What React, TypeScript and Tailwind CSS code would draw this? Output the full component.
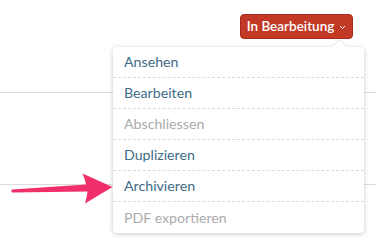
import React from "react";

const items = [
    { label: "Ansehen", enabled: true },
    { label: "Bearbeiten", enabled: true },
    { label: "Abschliessen", enabled: false },
    { label: "Duplizieren", enabled: true },
    { label: "Archivieren", enabled: true },
    { label: "PDF exportieren", enabled: false },
];

export default function App() {
    return (
        <div className="relative h-[245px] w-[376px] overflow-hidden bg-white font-['Lato','Open_Sans',sans-serif]">
            {/* STATUS BUTTON */}
            <div className="flex justify-end pr-[23px] pt-[14px]">
                <button className="flex h-[25px] w-[113px] items-center justify-center gap-[5px] rounded-[4px] border border-[#a52a1b] bg-[#c23a26] text-[13.5px] font-semibold text-white">
                    <span>In Bearbeitung</span>
                    <svg width="7" height="5" viewBox="0 0 7 5" className="mt-[2px]">
                        <path d="M1 1 L3.5 3.5 L6 1" fill="none" stroke="white" strokeWidth="1" />
                    </svg>
                </button>
            </div>

            {/* BACKGROUND RULES */}
            <div className="mt-[53px] h-px w-full bg-[#dcdcdc]" />
            <div className="mt-[91px] h-px w-full bg-[#dcdcdc]" />

            {/* DROPDOWN MENU */}
            <div className="absolute left-[113px] top-[47px] w-[251px] rounded-[4px] bg-white shadow-[0_1px_5px_rgba(0,0,0,0.22)]">
                <div className="absolute -top-[5px] left-[222px] h-[9px] w-[9px] rotate-45 bg-white shadow-[-1px_-1px_2px_rgba(0,0,0,0.1)]" />
                <ul className="relative">
                    {items.map((item, i) => (
                        <li
                            key={item.label}
                            className={
                                "flex h-[31px] items-center px-[11px] text-[14.2px] " +
                                (i < items.length - 1 ? "border-b border-dashed border-[#dadada] " : "") +
                                (item.enabled ? "text-[#3e6b86]" : "text-[#ababab]")
                            }
                        >
                            {item.label}
                        </li>
                    ))}
                </ul>
            </div>

            {/* ANNOTATION ARROW */}
            <svg className="absolute left-0 top-0" width="376" height="245" viewBox="0 0 376 245">
                <path
                    d="M12 189.6 L86 184.6 Q85 179 82.5 173.5 L112.5 187 L85 203.5 Q87 197 87.5 191.5 L12 192.6 Q10.5 191 12 189.6 Z"
                    fill="#f02f6b"
                />
            </svg>
        </div>
    );
}
